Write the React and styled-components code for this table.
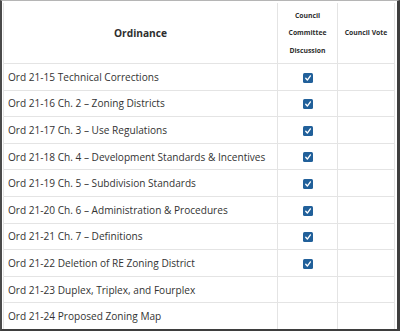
import React from "react";
import styled, { createGlobalStyle } from "styled-components";

const Global = createGlobalStyle`
  html, body { margin: 0; padding: 0; background: #fff; }
  body { font-family: "Open Sans", "Liberation Sans", sans-serif; }
`;

const Frame = styled.div`
  box-sizing: border-box;
  width: 400px;
  height: 331px;
  border-top: 1px solid #b5b5b5;
  border-left: 2px solid #4a4a4a;
  border-right: 3px solid #3e3e3e;
  border-bottom: 2px solid #3e3e3e;
  padding: 2px 2px 0 1px;
  overflow: hidden;
  background: #fff;
`;

const Table = styled.table`
  width: 100%;
  border-collapse: collapse;
  table-layout: fixed;
  color: #333;
`;

const HeadCell = styled.th`
  height: 60px;
  padding: 0;
  border: 1px solid #e4e4e4;
  border-top: none;
  text-align: center;
  vertical-align: middle;
  font-weight: 700;
  font-size: ${(p) => (p.$small ? "6.8px" : "10.2px")};
  line-height: ${(p) => (p.$small ? "17.5px" : "16px")};
  color: #2e2e2e;
  width: ${(p) => p.$w || "auto"};
`;

const Cell = styled.td`
  height: 25.6px;
  padding: 0 0 0 4px;
  border: 1px solid #e4e4e4;
  font-size: 10.1px;
  white-space: nowrap;
  vertical-align: middle;
  text-align: ${(p) => (p.$center ? "center" : "left")};
  ${(p) => p.$center && "padding: 0;"}
`;

const Box = styled.span`
  display: inline-flex;
  align-items: center;
  justify-content: center;
  width: 10px;
  height: 10px;
  border-radius: 1.5px;
  background: #21609a;
  vertical-align: middle;
  margin-top: -1px;
`;

const Check = () => (
  <Box>
    <svg width="8" height="8" viewBox="0 0 10 10">
      <path d="M2.2 5.4 L4.2 7.6 L8 2.4" fill="none" stroke="#fff" strokeWidth="1.7" strokeLinecap="round" strokeLinejoin="round" />
    </svg>
  </Box>
);

const rows = [
  ["Ord 21-15 Technical Corrections", true],
  ["Ord 21-16 Ch. 2 – Zoning Districts", true],
  ["Ord 21-17 Ch. 3 – Use Regulations", true],
  ["Ord 21-18 Ch. 4 – Development Standards & Incentives", true],
  ["Ord 21-19 Ch. 5 – Subdivision Standards", true],
  ["Ord 21-20 Ch. 6 – Administration & Procedures", true],
  ["Ord 21-21 Ch. 7 – Definitions", true],
  ["Ord 21-22 Deletion of RE Zoning District", true],
  ["Ord 21-23 Duplex, Triplex, and Fourplex", false],
  ["Ord 21-24 Proposed Zoning Map", false],
];

export default function App() {
  return (
    <>
      <Global />
      <Frame>
        <Table>
          <thead>
            <tr>
              <HeadCell>Ordinance</HeadCell>
              <HeadCell $small $w="59px">
                Council
                <br />
                Committee
                <br />
                Discussion
              </HeadCell>
              <HeadCell $small $w="56px">Council Vote</HeadCell>
            </tr>
          </thead>
          <tbody>
            {rows.map(([name, checked]) => (
              <tr key={name}>
                <Cell>{name}</Cell>
                <Cell $center>{checked && <Check />}</Cell>
                <Cell $center />
              </tr>
            ))}
          </tbody>
        </Table>
      </Frame>
    </>
  );
}
